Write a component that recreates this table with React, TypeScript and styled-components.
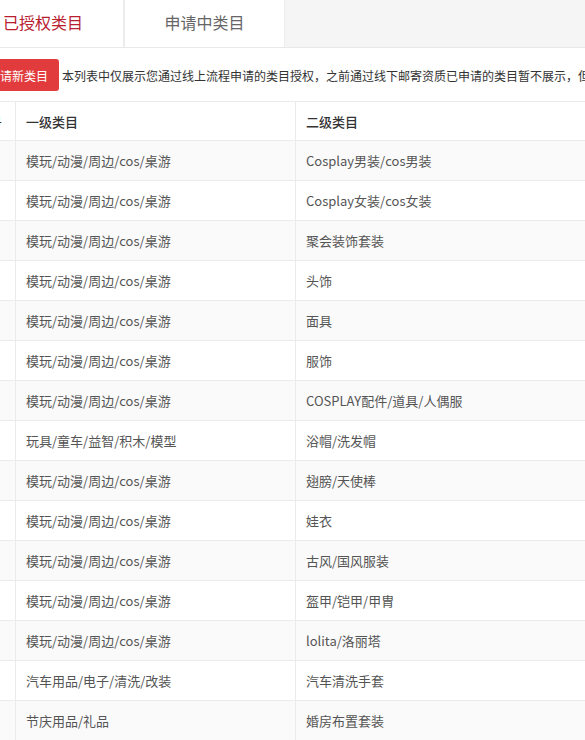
import React from "react";
import styled, { createGlobalStyle } from "styled-components";

const Global = createGlobalStyle`
  html, body { margin: 0; padding: 0; background: #fff; overflow: hidden; }
  body { font-family: "Noto Sans CJK SC", "Noto Sans", "Liberation Sans", sans-serif; }
`;

const Viewport = styled.div`
  width: 585px;
  height: 740px;
  overflow: hidden;
`;

const Page = styled.div`
  margin-left: -37px;
  width: 760px;
`;

const TabBar = styled.div`
  display: flex;
  height: 47px;
  background: #f5f5f5;
  border-bottom: 1px solid #e8e8e8;
`;

const Tab = styled.div<{ $active?: boolean; $divider?: boolean }>`
  width: 161px;
  height: 47px;
  box-sizing: border-box;
  padding-bottom: 4px;
  display: flex;
  align-items: center;
  justify-content: center;
  font-size: 16px;
  background: #fff;
  color: ${(p) => (p.$active ? "#b8202f" : "#666")};
  border-right: 1px solid #ececec;
  border-left: ${(p) => (p.$divider ? "1px solid #ececec" : "none")};
`;

const Toolbar = styled.div`
  display: flex;
  align-items: center;
  gap: 3px;
  padding: 11px 0 10px 14px;
  white-space: nowrap;
`;

const ApplyButton = styled.button`
  height: 32px;
  padding: 0 11px;
  border: none;
  border-radius: 3px;
  background: #e23b3d;
  color: #fff;
  font-family: inherit;
  font-size: 12px;
`;

const Note = styled.span`
  font-size: 12px;
  color: #333;
`;

const Table = styled.table`
  border-collapse: collapse;
  table-layout: fixed;
  width: 740px;
  font-size: 13px;
`;

const HeadCell = styled.th<{ $w: number; $pl?: number }>`
  box-sizing: border-box;
  width: ${(p) => p.$w}px;
  height: 39px;
  padding: 0 0 0 ${(p) => p.$pl ?? 10}px;
  text-align: left;
  font-weight: 500;
  color: #333;
  border: 1px solid #ebebeb;
  white-space: nowrap;
  overflow: hidden;
`;

const Row = styled.tr<{ $striped: boolean }>`
  background: ${(p) => (p.$striped ? "#fafafa" : "#fff")};
`;

const Cell = styled.td<{ $pl?: number }>`
  box-sizing: border-box;
  height: 40px;
  padding: 0 0 0 ${(p) => p.$pl ?? 10}px;
  color: #555;
  border: 1px solid #ebebeb;
  white-space: nowrap;
  overflow: hidden;
`;

const M = "模玩/动漫/周边/cos/桌游";
const rows: [string, string][] = [
  [M, "Cosplay男装/cos男装"],
  [M, "Cosplay女装/cos女装"],
  [M, "聚会装饰套装"],
  [M, "头饰"],
  [M, "面具"],
  [M, "服饰"],
  [M, "COSPLAY配件/道具/人偶服"],
  ["玩具/童车/益智/积木/模型", "浴帽/洗发帽"],
  [M, "翅膀/天使棒"],
  [M, "娃衣"],
  [M, "古风/国风服装"],
  [M, "盔甲/铠甲/甲胄"],
  [M, "lolita/洛丽塔"],
  ["汽车用品/电子/清洗/改装", "汽车清洗手套"],
  ["节庆用品/礼品", "婚房布置套装"],
];

export default function App() {
  return (
    <Viewport>
      <Global />
      <Page>
        <TabBar>
          <Tab $active>已授权类目</Tab>
          <Tab $divider>申请中类目</Tab>
        </TabBar>
        <Toolbar>
          <ApplyButton>申请新类目</ApplyButton>
          <Note>
            本列表中仅展示您通过线上流程申请的类目授权，之前通过线下邮寄资质已申请的类目暂不展示，但仍可正常发布商品。
          </Note>
        </Toolbar>
        <Table>
          <thead>
            <tr>
              <HeadCell $w={52} $pl={12}>序号</HeadCell>
              <HeadCell $w={280}>一级类目</HeadCell>
              <HeadCell $w={408}>二级类目</HeadCell>
            </tr>
          </thead>
          <tbody>
            {rows.map((r, i) => (
              <Row key={i} $striped={i % 2 === 0}>
                <Cell $pl={12}>{i + 1}</Cell>
                <Cell>{r[0]}</Cell>
                <Cell>{r[1]}</Cell>
              </Row>
            ))}
          </tbody>
        </Table>
      </Page>
    </Viewport>
  );
}
